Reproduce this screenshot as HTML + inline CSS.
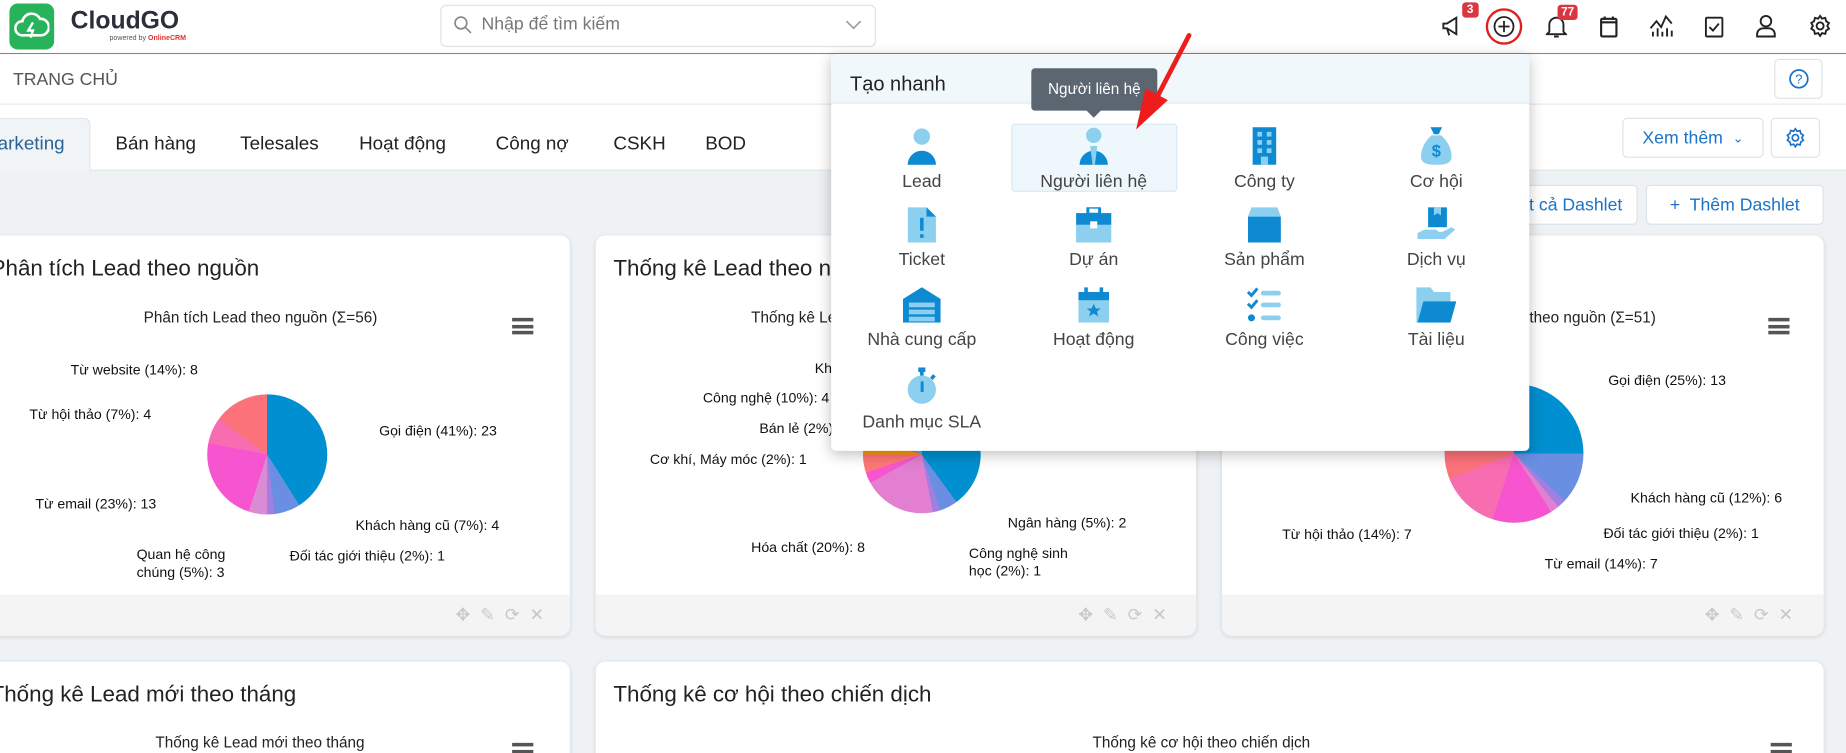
<!DOCTYPE html>
<html><head><meta charset="utf-8">
<style>
*{box-sizing:border-box;margin:0;padding:0}
html,body{width:1846px;height:753px;overflow:hidden;background:#eef2f5}
body{font-family:"Liberation Sans","Noto Sans CJK SC",sans-serif;color:#333}
#w{position:absolute;left:0;top:0;width:1568px;height:640px;transform:scale(1.17730);transform-origin:0 0;background:#eef2f5;overflow:hidden}
.a{position:absolute}
.top{left:0;top:0;width:1568px;height:46px;background:#fff;border-bottom:1.5px solid #e0673a}
.bc{left:0;top:46px;width:1568px;height:43px;background:#fff;border-bottom:1px solid #e3e6e8}
.tabs{left:0;top:89px;width:1568px;height:56px;background:#fff;border-bottom:1px solid #e3e6e8}
.tab{position:absolute;top:25px;font-size:16px;color:#222}
.btn{position:absolute;background:#fff;border:1px solid #dde3e8;border-radius:4px;color:#1a73c8;font-size:15px;display:flex;align-items:center;justify-content:center;white-space:nowrap}
.card{position:absolute;background:#fff;border-radius:8px;box-shadow:0 1px 4px rgba(0,0,0,.12);overflow:hidden}
.card h3{position:absolute;left:15px;top:18px;font-size:19px;font-weight:normal;color:#222}
.card .st{position:absolute;font-size:13px;color:#222}
.foot{position:absolute;left:0;bottom:0;width:100%;height:35px;background:#f4f4f4;color:#c8c8c8;font-size:15px}
.foot span{position:absolute;top:8px}
.hm{position:absolute;width:18px;height:14px;border-top:3px solid #555;border-bottom:3px solid #555}
.hm:after{content:"";position:absolute;left:0;top:2.5px;width:18px;height:3px;background:#555}
.lb{position:absolute;font-size:12px;color:#111;white-space:nowrap}
.pie{position:absolute;border-radius:50%}
.dd{left:706px;top:46px;width:593px;height:337px;background:#fff;border-radius:4px;box-shadow:0 3px 12px rgba(0,0,0,.25);overflow:hidden}
.dd .hd{position:absolute;left:0;top:0;width:100%;height:42px;background:#f1f8fc;border-bottom:1px solid #e2e8ec}
.it{position:absolute;width:142px;text-align:center;font-size:15px;color:#444}
.it svg{display:block;margin:0 auto 6px}
.ic{position:absolute;top:12px}
</style></head><body><div id="w">

<div class="a top">
 <div class="a" style="left:8px;top:3px;width:38px;height:39px;background:#27b35a;border-radius:7px"></div>
 <svg class="a" style="left:12px;top:10px" width="30" height="26" viewBox="0 0 30 26"><path d="M7 20a6 6 0 0 1 0-12 8 8 0 0 1 15-2 6 6 0 0 1 1 14z" fill="none" stroke="#fff" stroke-width="2.2"/><path d="M16 9l-4 7h4l-2 6" fill="none" stroke="#fff" stroke-width="2"/></svg>
 <div class="a" style="left:60px;top:6px;font-size:21px;font-weight:bold;color:#2a2f3a">CloudGO</div>
 <div class="a" style="left:93px;top:30px;font-size:6px;color:#555">powered by <b style="color:#d33">OnlineCRM</b></div>
 <div class="a" style="left:374px;top:4px;width:370px;height:36px;border:1px solid #dde2e6;border-radius:5px"></div>
 <svg class="a" style="left:385px;top:13px" width="16" height="16" viewBox="0 0 16 16"><circle cx="6.5" cy="6.5" r="5" fill="none" stroke="#888" stroke-width="1.4"/><path d="M10 10l5 5" stroke="#888" stroke-width="1.4"/></svg>
 <div class="a" style="left:409px;top:12px;font-size:15px;color:#777">Nhập để tìm kiếm</div>
 <svg class="a" style="left:718px;top:17px" width="14" height="9"><path d="M1 1l6 6 6-6" fill="none" stroke="#999" stroke-width="1.3"/></svg>
 <svg class="ic" style="left:1224px" width="20" height="20" viewBox="0 0 20 20" fill="none" stroke="#222" stroke-width="1.6"><path d="M2 8v4h3l8 5V3L5 8z"/><path d="M5 12l2 6"/></svg>
 <div class="a" style="left:1242px;top:2px;background:#d9363e;color:#fff;font-size:10px;font-weight:bold;padding:1px 4px;border-radius:3px">3</div>
 <div class="a" style="left:1262px;top:7px;width:31px;height:31px;border:2px solid #e02020;border-radius:50%"></div>
 <svg class="ic" style="left:1268px;top:13px" width="19" height="19" viewBox="0 0 20 20" fill="none" stroke="#222" stroke-width="1.6"><circle cx="10" cy="10" r="8.5"/><path d="M10 5v10M5 10h10"/></svg>
 <svg class="ic" style="left:1313px" width="18" height="21" viewBox="0 0 18 21" fill="none" stroke="#222" stroke-width="1.6"><path d="M3 15V9a6 6 0 0 1 12 0v6l2 2H1z"/><path d="M7 19h4"/></svg>
 <div class="a" style="left:1323px;top:4px;background:#d9363e;color:#fff;font-size:10px;font-weight:bold;padding:1px 3px;border-radius:3px">77</div>
 <svg class="ic" style="left:1358px;top:13px" width="17" height="19" viewBox="0 0 17 19" fill="none" stroke="#222" stroke-width="1.8"><rect x="2" y="3" width="13" height="15" rx="1"/><path d="M2 6h13M5 1v3M12 1v3"/></svg>
 <svg class="ic" style="left:1401px" width="21" height="20" viewBox="0 0 21 20" fill="none" stroke="#222" stroke-width="1.6"><path d="M1 12l5-6 4 5 4-9 5 6"/><path d="M3 19v-4M7 19v-7M11 19v-4M15 19v-7M19 19v-5"/></svg>
 <svg class="ic" style="left:1447px;top:13px" width="18" height="19" viewBox="0 0 18 19" fill="none" stroke="#222" stroke-width="1.6"><rect x="2" y="2" width="14" height="16" rx="1"/><path d="M5 10l3 3 5-6"/></svg>
 <svg class="ic" style="left:1491px" width="18" height="20" viewBox="0 0 18 20" fill="none" stroke="#222" stroke-width="1.6"><circle cx="9" cy="6" r="4.5"/><path d="M1.5 19v-2a5 5 0 0 1 5-5h5a5 5 0 0 1 5 5v2z"/></svg>
 <svg class="ic" style="left:1536px" width="20" height="20" viewBox="0 0 20 20" fill="none" stroke="#222" stroke-width="1.6"><circle cx="10" cy="10" r="3"/><path d="M10 1.5l1.6 2.4 2.8-.7.7 2.8 2.4 1.6-1.4 2.4 1.4 2.4-2.4 1.6-.7 2.8-2.8-.7L10 18.5l-1.6-2.4-2.8.7-.7-2.8-2.4-1.6L3.9 10 2.5 7.6l2.4-1.6.7-2.8 2.8.7z"/></svg>
</div>

<div class="a bc">
 <div class="a" style="left:11px;top:13px;font-size:15px;color:#555">TRANG CHỦ</div>
 <div class="btn" style="left:1507px;top:4px;width:41px;height:34px"><svg width="18" height="18" viewBox="0 0 18 18"><circle cx="9" cy="9" r="7.5" fill="none" stroke="#1a73c8" stroke-width="1.5"/><text x="9" y="13" font-size="11" text-anchor="middle" fill="#1a73c8" font-family="Liberation Sans">?</text></svg></div>
</div>

<div class="a tabs">
 <div class="a" style="left:-4px;top:11px;width:81px;height:46px;background:#f0f4f7;border:1px solid #e3e6e8;border-bottom:none;border-radius:0 6px 0 0"></div>
 <div class="tab" style="left:-2px;color:#2a6496">arketing</div>
 <div class="tab" style="left:98px">Bán hàng</div>
 <div class="tab" style="left:204px">Telesales</div>
 <div class="tab" style="left:305px">Hoạt động</div>
 <div class="tab" style="left:421px">Công nợ</div>
 <div class="tab" style="left:521px">CSKH</div>
 <div class="tab" style="left:599px">BOD</div>
 <div class="btn" style="left:1378px;top:11px;width:120px;height:34px">Xem thêm &nbsp;<span style="font-size:11px">&#8964;</span></div>
 <div class="btn" style="left:1504px;top:11px;width:42px;height:34px"><svg width="18" height="18" viewBox="0 0 20 20" fill="none" stroke="#1a73c8" stroke-width="1.6"><circle cx="10" cy="10" r="3"/><path d="M10 1.5l1.6 2.4 2.8-.7.7 2.8 2.4 1.6-1.4 2.4 1.4 2.4-2.4 1.6-.7 2.8-2.8-.7L10 18.5l-1.6-2.4-2.8.7-.7-2.8-2.4-1.6L3.9 10 2.5 7.6l2.4-1.6.7-2.8 2.8.7z"/></svg></div>
</div>

<div class="btn" style="left:1200px;top:157px;width:191px;height:34px;justify-content:flex-end;padding-right:12px">Thu gọn tất cả Dashlet</div>
<div class="btn" style="left:1398px;top:157px;width:151px;height:34px">+&nbsp; Thêm Dashlet</div>

<div class="card" style="left:-8px;top:200px;width:492px;height:340px">
 <h3 style="left:0">Phân tích Lead theo nguồn</h3>
 <div class="st" style="left:130px;top:62px">Phân tích Lead theo nguồn (Σ=56)</div>
 <div class="hm" style="left:443px;top:70px"></div>
 <div class="pie" style="left:184px;top:135px;width:102px;height:102px;background:conic-gradient(#008fd0 0 41%,#6a8ee2 41% 48%,#a07fe0 48% 50%,#d98bd3 50% 55%,#f655cf 55% 78%,#f86cb0 78% 85%,#fc727a 85% 100%)"></div>
 <div class="lb" style="left:68px;top:107px">Từ website (14%): 8</div>
 <div class="lb" style="left:33px;top:145px">Từ hội thảo (7%): 4</div>
 <div class="lb" style="left:330px;top:159px">Gọi điện (41%): 23</div>
 <div class="lb" style="left:38px;top:221px">Từ email (23%): 13</div>
 <div class="lb" style="left:310px;top:239px">Khách hàng cũ (7%): 4</div>
 <div class="lb" style="left:124px;top:264px;line-height:15px">Quan hệ công<br>chúng (5%): 3</div>
 <div class="lb" style="left:254px;top:265px">Đối tác giới thiệu (2%): 1</div>
 <div class="foot"><span style="left:395px">✥ &nbsp;✎ &nbsp;⟳ &nbsp;✕</span></div>
</div>

<div class="card" style="left:506px;top:200px;width:510px;height:340px">
 <h3>Thống kê Lead theo ngành nghề</h3>
 <div class="st" style="left:132px;top:62px">Thống kê Lead theo ngành nghề (Σ=40)</div>
 <div class="hm" style="left:443px;top:70px"></div>
 <div class="pie" style="left:227px;top:136px;width:100px;height:100px;background:conic-gradient(#008fd0 0 40%,#6a8ee2 40% 45%,#a07fe0 45% 47%,#e27fd0 47% 67%,#f655cf 67% 70%,#f77 70% 75%,#f90 75% 80%,#f4a 80% 82%,#4be 82% 100%)"></div>
 <div class="lb" style="left:186px;top:106px">Khách sạn (5%): 2</div>
 <div class="lb" style="left:91px;top:131px">Công nghệ (10%): 4</div>
 <div class="lb" style="left:139px;top:157px">Bán lẻ (2%): 1</div>
 <div class="lb" style="left:46px;top:183px">Cơ khí, Máy móc (2%): 1</div>
 <div class="lb" style="left:350px;top:237px">Ngân hàng (5%): 2</div>
 <div class="lb" style="left:132px;top:258px">Hóa chất (20%): 8</div>
 <div class="lb" style="left:317px;top:263px;line-height:15px">Công nghệ sinh<br>học (2%): 1</div>
 <div class="foot"><span style="left:410px">✥ &nbsp;✎ &nbsp;⟳ &nbsp;✕</span></div>
</div>

<div class="card" style="left:1038px;top:200px;width:511px;height:340px">
 <h3>Phân tích Lead theo nguồn</h3>
 <div class="st" style="left:170px;top:62px">Phân tích Lead theo nguồn (Σ=51)</div>
 <div class="hm" style="left:464px;top:70px"></div>
 <div class="pie" style="left:189px;top:126px;width:118px;height:118px;background:conic-gradient(#008fd0 0 25%,#6a8ee2 25% 37%,#a07fe0 37% 39%,#e27fd0 39% 41%,#f655cf 41% 55%,#f86cb0 55% 69%,#fc727a 69% 100%)"></div>
 <div class="lb" style="left:328px;top:116px">Gọi điện (25%): 13</div>
 <div class="lb" style="left:347px;top:216px">Khách hàng cũ (12%): 6</div>
 <div class="lb" style="left:51px;top:247px">Từ hội thảo (14%): 7</div>
 <div class="lb" style="left:324px;top:246px">Đối tác giới thiệu (2%): 1</div>
 <div class="lb" style="left:274px;top:272px">Từ email (14%): 7</div>
 <div class="foot"><span style="left:410px">✥ &nbsp;✎ &nbsp;⟳ &nbsp;✕</span></div>
</div>

<div class="card" style="left:-8px;top:562px;width:492px;height:100px">
 <h3 style="left:0">Thống kê Lead mới theo tháng</h3>
 <div class="st" style="left:140px;top:61px">Thống kê Lead mới theo tháng</div>
 <div class="hm" style="left:443px;top:69px"></div>
</div>
<div class="card" style="left:506px;top:562px;width:1043px;height:100px">
 <h3>Thống kê cơ hội theo chiến dịch</h3>
 <div class="st" style="left:422px;top:61px">Thống kê cơ hội theo chiến dịch</div>
 <div class="hm" style="left:998px;top:69px"></div>
</div>

<div class="a dd">
 <div class="hd"></div>
 <div class="a" style="left:16px;top:16px;font-size:17px;color:#222">Tạo nhanh</div>
 <div class="a" style="left:153px;top:59px;width:141px;height:58px;background:#eef7fc;border:1px solid #d6e9f5;border-radius:3px"></div>

 <div class="it" style="left:6px;top:62px"><svg width="30" height="32" viewBox="0 0 30 32"><circle cx="15" cy="8" r="7" fill="#8ccfee"/><path d="M3 32a12 12 0 0 1 24 0z" fill="#0d8ad2"/></svg>Lead</div>
 <div class="it" style="left:152px;top:62px"><svg width="30" height="32" viewBox="0 0 30 32"><circle cx="15" cy="7" r="6.5" fill="#8ccfee"/><path d="M3 32a12 12 0 0 1 24 0z" fill="#0d8ad2"/><path d="M12 16h6l-2 16h-2z" fill="#8ccfee"/></svg>Người liên hệ</div>
 <div class="it" style="left:297px;top:62px"><svg width="26" height="32" viewBox="0 0 26 32"><rect x="3" y="0" width="20" height="32" fill="#0d8ad2"/><g fill="#8ccfee"><rect x="7" y="4" width="4" height="4"/><rect x="15" y="4" width="4" height="4"/><rect x="7" y="11" width="4" height="4"/><rect x="15" y="11" width="4" height="4"/><rect x="7" y="18" width="4" height="4"/><rect x="15" y="18" width="4" height="4"/><rect x="10" y="25" width="6" height="7"/></g></svg>Công ty</div>
 <div class="it" style="left:443px;top:62px"><svg width="26" height="32" viewBox="0 0 26 32"><path d="M8 0h10l-3 6h-4z" fill="#0d8ad2"/><path d="M9 7h8c6 5 9 12 9 18 0 5-4 7-13 7S0 30 0 25c0-6 3-13 9-18z" fill="#8ccfee"/><text x="13" y="25" font-size="14" font-weight="bold" text-anchor="middle" fill="#0d8ad2" font-family="Liberation Sans">$</text></svg>Cơ hội</div>

 <div class="it" style="left:6px;top:130px"><svg width="24" height="30" viewBox="0 0 24 30"><path d="M0 0h16l8 8v22H0z" fill="#8ccfee"/><path d="M16 0v8h8z" fill="#0d8ad2"/><rect x="10.5" y="9" width="3" height="11" fill="#0d8ad2"/><rect x="10.5" y="23" width="3" height="3" fill="#0d8ad2"/></svg>Ticket</div>
 <div class="it" style="left:152px;top:130px"><svg width="30" height="30" viewBox="0 0 30 30"><rect x="10" y="0" width="10" height="6" rx="1" fill="none" stroke="#0d8ad2" stroke-width="2.5"/><rect x="0" y="5" width="30" height="10" fill="#0d8ad2"/><rect x="0" y="15" width="30" height="15" fill="#8ccfee"/><rect x="12" y="12" width="6" height="6" fill="#fff"/></svg>Dự án</div>
 <div class="it" style="left:297px;top:130px"><svg width="28" height="30" viewBox="0 0 28 30"><path d="M3 0h22l3 8H0z" fill="#8ccfee"/><rect x="0" y="8" width="28" height="22" fill="#0d8ad2"/></svg>Sản phẩm</div>
 <div class="it" style="left:443px;top:130px"><svg width="32" height="30" viewBox="0 0 32 30"><rect x="9" y="0" width="16" height="17" fill="#0d8ad2"/><path d="M14 0h6v7l-3-2-3 2z" fill="#8ccfee"/><path d="M0 22l6-3h10l2 2h-8l11 0 8-4 3 2-9 8H0z" fill="#8ccfee"/></svg>Dịch vụ</div>

 <div class="it" style="left:6px;top:198px"><svg width="32" height="30" viewBox="0 0 32 30"><path d="M0 10L16 0l16 10v20H0z" fill="#0d8ad2"/><g fill="#8ccfee"><rect x="5" y="13" width="22" height="4"/><rect x="5" y="19" width="22" height="4"/><rect x="5" y="25" width="22" height="4"/></g></svg>Nhà cung cấp</div>
 <div class="it" style="left:152px;top:198px"><svg width="26" height="30" viewBox="0 0 26 30"><rect x="0" y="4" width="26" height="26" fill="#8ccfee"/><rect x="0" y="4" width="26" height="7" fill="#0d8ad2"/><rect x="5" y="0" width="3" height="7" fill="#0d8ad2"/><rect x="18" y="0" width="3" height="7" fill="#0d8ad2"/><path d="M13 14l1.8 4h4.2l-3.3 2.6 1.2 4.2-3.900-2.5-3.9 2.5 1.2-4.2L7 18h4.2z" fill="#0d8ad2"/></svg>Hoạt động</div>
 <div class="it" style="left:297px;top:198px"><svg width="30" height="30" viewBox="0 0 30 30"><path d="M1 4l3 3 5-6M1 14l3 3 5-6" fill="none" stroke="#0d8ad2" stroke-width="2.5"/><circle cx="4" cy="26" r="3" fill="#0d8ad2"/><g fill="#8ccfee"><rect x="12" y="3" width="17" height="4" rx="2"/><rect x="12" y="13" width="17" height="4" rx="2"/><rect x="12" y="24" width="17" height="4" rx="2"/></g></svg>Công việc</div>
 <div class="it" style="left:443px;top:198px"><svg width="34" height="30" viewBox="0 0 34 30"><path d="M0 0h12l3 4h14v26H0z" fill="#8ccfee"/><path d="M6 12h28l-5 18H1z" fill="#0d8ad2"/></svg>Tài liệu</div>

 <div class="it" style="left:6px;top:266px"><svg width="26" height="32" viewBox="0 0 26 32"><rect x="10" y="0" width="6" height="4" fill="#0d8ad2"/><rect x="11.5" y="3" width="3" height="4" fill="#0d8ad2"/><circle cx="13" cy="19" r="12" fill="#8ccfee"/><rect x="12" y="12" width="2.5" height="9" fill="#0d8ad2"/><rect x="21" y="6" width="3" height="4" fill="#0d8ad2" transform="rotate(40 22 8)"/></svg>Danh mục SLA</div>

 <div class="a" style="left:170px;top:12px;width:107px;height:36px;background:#5b6670;border-radius:3px;color:#fff;font-size:13px;text-align:center;line-height:36px">Người liên hệ</div>
 <div class="a" style="left:216px;top:47px;border:7px solid transparent;border-top-color:#5b6670;border-bottom:none"></div>
</div>

<svg class="a" style="left:940px;top:20px" width="90" height="100" viewBox="0 0 90 100"><path d="M70 10L40 68" stroke="#ee1c1c" stroke-width="4" stroke-linecap="round"/><path d="M25 90L33 55 52 65z" fill="#ee1c1c"/></svg>

</div></body></html>
